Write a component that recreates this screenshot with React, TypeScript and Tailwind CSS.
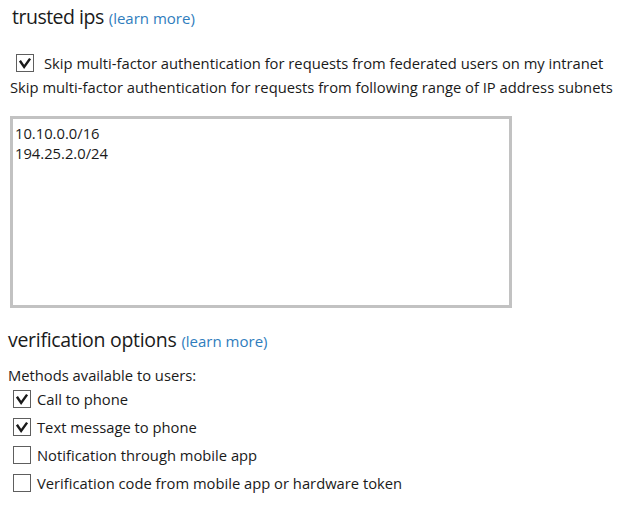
import React from 'react'

const font = { fontFamily: '"Open Sans", "Noto Sans", sans-serif' }

const Check = ({ checked }: { checked: boolean }) => (
  <span className="flex size-[18px] shrink-0 items-center justify-center border border-[#5e5e5e] bg-white">
    {checked && (
      <svg viewBox="0 0 16 16" className="size-[14px]">
        <path d="M2.2 5.5 L7 12.5 L13.8 3" fill="none" stroke="#1a1a1a" strokeWidth="2.8" strokeLinejoin="miter" />
      </svg>
    )}
  </span>
)

const LearnMore = () => <a className="text-[15px] text-[#2f7dbd]">(learn more)</a>

const methods = [
  { label: 'Call to phone', checked: true },
  { label: 'Text message to phone', checked: true },
  { label: 'Notification through mobile app', checked: false },
  { label: 'Verification code from mobile app or hardware token', checked: false },
]

export default function App() {
  return (
    <div className="h-[505px] w-[624px] bg-white text-[14.75px] leading-[20px] text-[#1a1a1a]" style={font}>
      <div className="flex flex-col pl-[10px] pt-[5px]">
        <div className="flex items-baseline gap-[5px] pl-[2px] leading-[24px]">
          <h2 className="text-[19.5px] tracking-[-0.5px]">trusted ips</h2>
          <LearnMore />
        </div>

        <label className="mt-[23px] flex items-center gap-[10px] pl-[6px]">
          <Check checked />
          <span>Skip multi-factor authentication for requests from federated users on my intranet</span>
        </label>
        <p className="mt-[4px]">
          Skip multi-factor authentication for requests from following range of IP address subnets
        </p>

        <textarea
          className="mt-[19px] h-[192px] w-[502px] resize-none border-[3px] border-[#c2c2c2] px-[2px] pt-[4px] leading-[20px] outline-none"
          defaultValue={'10.10.0.0/16\n194.25.2.0/24'}
        />
      </div>

      <div className="flex flex-col pl-[8px] pt-[20px]">
        <div className="flex items-baseline gap-[5px] leading-[24px]">
          <h2 className="text-[19.5px] tracking-[-0.3px]">verification options</h2>
          <LearnMore />
        </div>
        <p className="mt-[12px]">Methods available to users:</p>
        <div className="mt-[4px] flex flex-col gap-[8px] pl-[5px]">
          {methods.map((m) => (
            <label key={m.label} className="flex items-center gap-[6px]">
              <Check checked={m.checked} />
              <span>{m.label}</span>
            </label>
          ))}
        </div>
      </div>
    </div>
  )
}
